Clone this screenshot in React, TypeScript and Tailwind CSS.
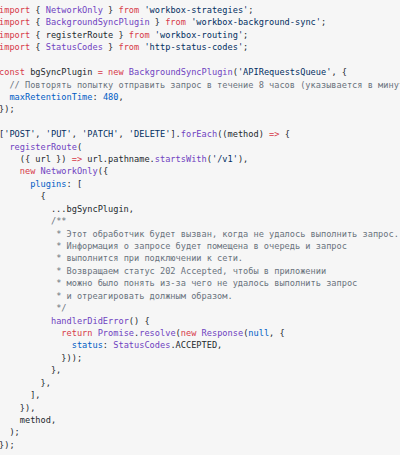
import React from "react";

type Tok = [string, string?];

const K = "text-[#d73a49]"; // keyword
const F = "text-[#6f42c1]"; // function/class
const C = "text-[#005cc5]"; // constant/property
const S = "text-[#032f62]"; // string
const M = "text-[#6a737d]"; // comment

const lines: Tok[][] = [
  [["import", K], [" { "], ["NetworkOnly", F], [" } "], ["from", K], [" "], ["'workbox-strategies'", S], [";"]],
  [["import", K], [" { "], ["BackgroundSyncPlugin", F], [" } "], ["from", K], [" "], ["'workbox-background-sync'", S], [";"]],
  [["import", K], [" { registerRoute } "], ["from", K], [" "], ["'workbox-routing'", S], [";"]],
  [["import", K], [" { "], ["StatusCodes", F], [" } "], ["from", K], [" "], ["'http-status-codes'", S], [";"]],
  [],
  [["const", K], [" bgSyncPlugin "], ["=", K], [" "], ["new", K], [" "], ["BackgroundSyncPlugin", F], ["("], ["'APIRequestsQueue'", S], [", {"]],
  [["  "], ["// Повторять попытку отправить запрос в течение 8 часов (указывается в минутах)", M]],
  [["  "], ["maxRetentionTime", C], [": "], ["480", C], [","]],
  [["});"]],
  [],
  [["["], ["'POST'", S], [", "], ["'PUT'", S], [", "], ["'PATCH'", S], [", "], ["'DELETE'", S], ["]."], ["forEach", F], ["((method) "], ["=>", K], [" {"]],
  [["  "], ["registerRoute", F], ["("]],
  [["    ({ url }) "], ["=>", K], [" url.pathname."], ["startsWith", F], ["("], ["'/v1'", S], ["),"]],
  [["    "], ["new", K], [" "], ["NetworkOnly", F], ["({"]],
  [["      "], ["plugins", C], [": ["]],
  [["        {"]],
  [["          ...bgSyncPlugin,"]],
  [["          "], ["/**", M]],
  [["           "], ["* Этот обработчик будет вызван, когда не удалось выполнить запрос.", M]],
  [["           "], ["* Информация о запросе будет помещена в очередь и запрос", M]],
  [["           "], ["* выполнится при подключении к сети.", M]],
  [["           "], ["* Возвращаем статус 202 Accepted, чтобы в приложении", M]],
  [["           "], ["* можно было понять из-за чего не удалось выполнить запрос", M]],
  [["           "], ["* и отреагировать должным образом.", M]],
  [["           "], ["*/", M]],
  [["          "], ["handlerDidError", F], ["() {"]],
  [["            "], ["return", K], [" "], ["Promise", F], ["."], ["resolve", F], ["("], ["new", K], [" "], ["Response", F], ["("], ["null", C], [", {"]],
  [["              "], ["status", C], [": "], ["StatusCodes", F], [".ACCEPTED,"]],
  [["            }));"]],
  [["          },"]],
  [["        },"]],
  [["      ],"]],
  [["    }),"]],
  [["    method,"]],
  [["  );"]],
  [["});"]],
];

export default function App() {
  return (
    <div className="w-[400px] h-[455px] overflow-hidden bg-[#f6f6f6]">
      <pre
        className="m-0 pt-[4px] ml-[-1px] whitespace-pre text-[8.65px] leading-[12.43px] text-[#24292e]"
        style={{ fontFamily: '"DejaVu Sans Mono", "Liberation Mono", monospace' }}
      >
        {lines.map((l, i) => (
          <div key={i} className="h-[12.43px]">
            {l.length === 0
              ? "\u00a0"
              : l.map((t, j) => (
                  <span key={j} className={t[1] ?? ""}>
                    {t[0]}
                  </span>
                ))}
          </div>
        ))}
      </pre>
    </div>
  );
}
